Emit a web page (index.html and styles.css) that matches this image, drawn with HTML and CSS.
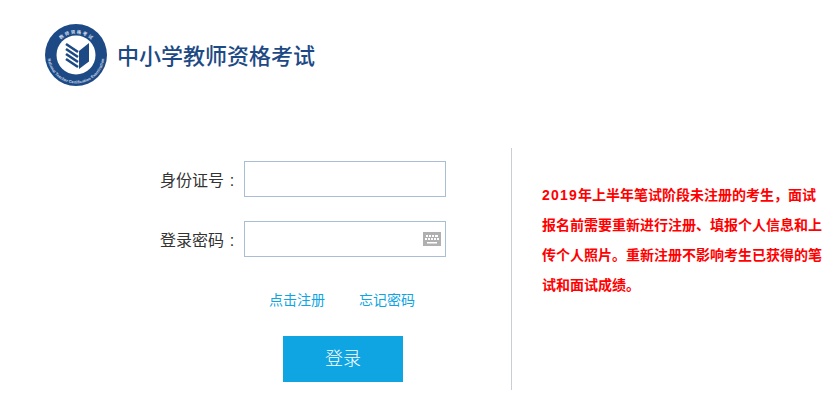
FILE: index.html
```html
<!DOCTYPE html>
<html lang="zh-CN">
<head>
    <meta charset="UTF-8">
    <title>中小学教师资格考试</title>
    <link rel="stylesheet" href="styles.css">
</head>
<body>

<div class="header">
    <svg class="logo" width="64" height="64" viewBox="0 0 64 64">
        <circle cx="32" cy="32" r="31" fill="#1d4a85"/>
        <circle cx="32" cy="32" r="19.500" fill="#fff"/>
        <path d="M35 28 L45 20 V38.500 L35 46 Z" fill="#1d4a85"/>
        <path d="M22 21 L34 29 M22 26 L34 34 M22 31 L34 39 M22 36 L34 44" stroke="#1d4a85" stroke-width="2.600" fill="none"/>
        <path id="ringTop" d="M10.500 32 A21.500 21.500 0 0 1 53.500 32" fill="none" transform="rotate(0 32 32)"/>
        <path id="ringBottom" d="M3.500 32 A28.500 28.500 0 0 0 60.500 32" fill="none"/>
        <text class="logo-ring" font-size="4.500" fill="#cfdcec"><textPath href="#ringTop" startOffset="50%" text-anchor="middle">教 师 资 格 考 试</textPath></text>
        <text class="logo-ring" font-size="4" fill="#cfdcec"><textPath href="#ringBottom" startOffset="50%" text-anchor="middle">National Teacher Certification Examination</textPath></text>
    </svg>
    <div class="site-title">中小学教师资格考试</div>
</div>

<div class="container">
    <!-- 登录表单 -->
    <div class="login-box">
        <div class="input-group">
            <label for="idCard">身份证号<span class="colon">:</span></label>
            <input type="text" id="idCard">
        </div>
        <div class="input-group">
            <label for="password">登录密码<span class="colon">:</span></label>
            <div class="input-wrap">
                <input type="password" id="password">
                <svg class="keyboard" width="18" height="14" viewBox="0 0 18 14">
                    <rect width="18" height="14" fill="#b0b0b0"/>
                    <path d="M3 3h2v2H3zM6 3h2v2H6zM9 3h2v2H9zM12 3h3v2h-3zM2 6h2v2H2zM5 6h2v2H5zM8 6h2v2H8zM11 6h2v2h-2zM14 6h2v2h-2zM4 10h10v1.500H4z" fill="#fff"/>
                </svg>
            </div>
        </div>
        <div class="links">
            <a href="#">点击注册</a>
            <a href="#">忘记密码</a>
        </div>
        <button class="login-btn">登录</button>
    </div>

    <!-- 右侧提示 -->
    <div class="notice">
        <span class="year">2019</span>年上半年笔试阶段未注册的考生<span class="comma">，</span>面试报名前需要重新进行注册、填报个人信息和上传个人照片。重新注册不影响考生已获得的笔试和面试成绩。
    </div>
</div>

</body>
</html>
```

FILE: styles.css
```css
body {
    font-family: "Liberation Sans", "Noto Sans CJK SC", sans-serif;
    margin: 0;
    padding: 0;
    background-color: #fff;
    color: #333;
}

.header {
    display: flex;
    align-items: center;
    height: 64px;
    padding: 23px 0 0 44px;
}

.logo {
    flex: none;
}

.logo-ring {
    font-family: "Liberation Sans", "Noto Sans CJK SC", sans-serif;
    font-weight: bold;
}

.site-title {
    margin: 0 0 3px 9px;
    font-size: 22px;
    font-weight: 500;
    color: #1d4a85;
}

.container {
    display: flex;
    margin-top: 61px;
}

.login-box {
    width: 512px;
    height: 242px;
    box-sizing: border-box;
    padding-top: 13px;
    border-right: 1px solid #c8ced4;
    flex: none;
}

.input-group {
    display: flex;
    align-items: center;
    height: 36px;
    margin-bottom: 24px;
}

.input-group label {
    width: 244px;
    padding-right: 4px;
    box-sizing: border-box;
    font-size: 16px;
    text-align: right;
    flex: none;
}

.colon {
    display: inline-block;
    width: 16px;
    text-align: center;
}

.input-group input {
    width: 202px;
    height: 36px;
    padding: 0 8px;
    border: 1px solid #a9bdd4;
    box-sizing: border-box;
    outline: none;
    display: block;
}

.input-wrap {
    position: relative;
}

.keyboard {
    position: absolute;
    right: 5px;
    top: 11px;
}

.links {
    display: flex;
    gap: 34px;
    padding-left: 269px;
    margin-top: 33px;
}

.links a {
    font-size: 14px;
    line-height: 20px;
    color: #0ea5e2;
    text-decoration: none;
}

.login-btn {
    display: block;
    width: 120px;
    height: 46px;
    margin: 26px 0 0 283px;
    padding: 0 0 4px;
    border: none;
    background-color: #0ea5e2;
    color: #fff;
    font-family: inherit;
    font-size: 18px;
    font-weight: 300;
}

.notice {
    width: 280px;
    margin: 31px 0 0 30px;
    font-size: 14px;
    line-height: 30px;
    font-weight: bold;
    color: #f00;
}

.year {
    letter-spacing: 1.200px;
}

.comma {
    font-family: "Noto Sans CJK TC", sans-serif;
}
```
